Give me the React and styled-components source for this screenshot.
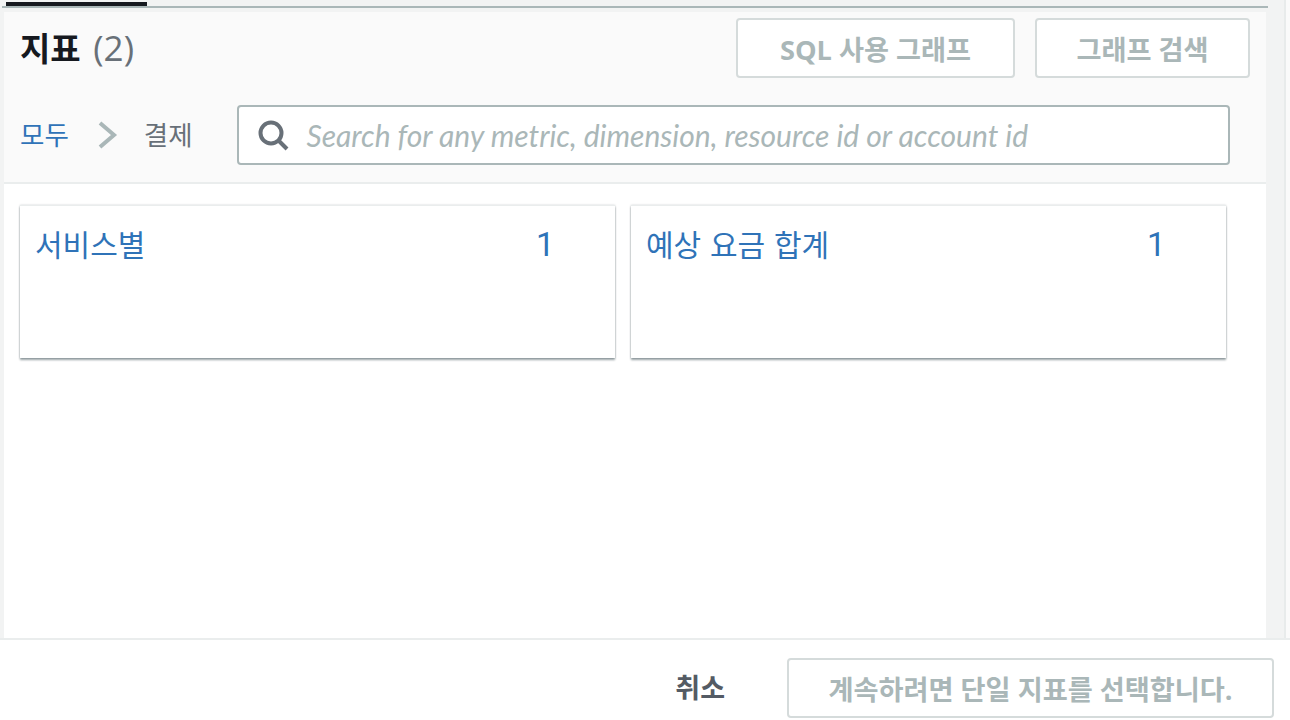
import React from 'react'
import styled, { createGlobalStyle } from 'styled-components'

const Global = createGlobalStyle`
  html, body {
    margin: 0;
    padding: 0;
    background: #f2f3f3;
  }
  * {
    box-sizing: border-box;
  }
`

const font = `"Open Sans", "Noto Sans CJK KR", sans-serif`

const Page = styled.div`
  width: 1290px;
  height: 720px;
  overflow: hidden;
  display: flex;
  flex-direction: column;
  font-family: ${font};
  background: #fafafa;
`

const Body = styled.div`
  flex: 1;
  min-height: 0;
  display: flex;
  flex-direction: column;
  margin-right: 4px;
  padding: 0 18px 0 4px;
  background: #f2f3f3;
  border-right: 2px solid #e8ebeb;
`

const TabLine = styled.div`
  height: 8px;
  margin: 0 -2px;
  border-bottom: 2px solid #aab7b8;
  padding: 2px 0 0 4px;
`

const ActiveTab = styled.div`
  width: 141px;
  height: 4px;
  background: #16191f;
`

const Panel = styled.div`
  flex: 1;
  margin-top: 4px;
  background: #fff;
  display: flex;
  flex-direction: column;
`

const Header = styled.div`
  height: 172px;
  background: #fafafa;
  border-bottom: 2px solid #eaeded;
  padding: 6px 16px 0;
`

const TitleRow = styled.div`
  display: flex;
  justify-content: space-between;
  align-items: center;
  height: 60px;
`

const Title = styled.h2`
  margin: 0;
  font-size: 33px;
  line-height: 60px;
  font-weight: 700;
  color: #16191f;
`

const Count = styled.span`
  margin-left: 4px;
  font-size: 35px;
  font-weight: 400;
  color: #687078;
`

const Actions = styled.div`
  display: flex;
  gap: 20px;
`

const GhostButton = styled.button`
  height: 60px;
  width: ${(p) => p.$width}px;
  padding: 0;
  background: #fff;
  border: 2px solid #d5dbdb;
  border-radius: 4px;
  font-family: ${font};
  font-size: 27.2px;
  font-weight: 700;
  color: #aab7b8;
`

const FilterRow = styled.div`
  display: flex;
  align-items: center;
  margin-top: 27px;
  padding-right: 20px;
`

const Crumb = styled.span`
  font-size: 26.5px;
  line-height: 60px;
  color: ${(p) => (p.$link ? '#2f73b8' : '#687078')};
`

const Chevron = styled.svg`
  width: 20px;
  height: 30px;
  margin: 0 26px 0 29px;
`

const SearchBox = styled.div`
  flex: 1;
  height: 60px;
  margin-left: 44px;
  display: flex;
  align-items: center;
  gap: 18px;
  padding-left: 18px;
  background: #fff;
  border: 2px solid #aab7b8;
  border-radius: 4px;
`

const Placeholder = styled.span`
  font-family: Lato, "Noto Sans CJK KR", sans-serif;
  font-size: 30px;
  font-style: italic;
  color: #aab7b8;
`

const Cards = styled.div`
  flex: 1;
  display: flex;
  gap: 16px;
  padding: 21px 16px 0;
  align-items: flex-start;
`

const Card = styled.div`
  width: 595px;
  height: 153px;
  padding: 17px 16px 17px 15px;
  display: flex;
  background: #fff;
  border-top: 1px solid #eaeded;
  box-shadow: 0 2px 2px 0 rgba(0, 28, 36, 0.4), 0 0 2px 0 rgba(0, 28, 36, 0.2);
`

const CardName = styled.span`
  width: 501px;
  font-size: 30px;
  line-height: 44px;
  word-spacing: 1px;
  color: #2f73b8;
`

const CardCount = styled.span`
  font-family: Roboto, sans-serif;
  font-size: 33px;
  line-height: 44px;
  color: #2f73b8;
`

const Footer = styled.div`
  height: 82px;
  display: flex;
  justify-content: flex-end;
  align-items: flex-start;
  gap: 62px;
  padding: 18px 16px 0 0;
  background: #fff;
  border-top: 2px solid #eaeded;
`

const Cancel = styled.span`
  font-size: 27px;
  line-height: 60px;
  font-weight: 700;
  color: #545b64;
`

const metrics = [
  { name: '서비스별', count: 1 },
  { name: '예상 요금 합계', count: 1 },
]

export default function App() {
  return (
    <Page>
      <Global />
      <Body>
        <TabLine>
          <ActiveTab />
        </TabLine>
        <Panel>
          <Header>
            <TitleRow>
              <Title>
                지표 <Count>(2)</Count>
              </Title>
              <Actions>
                <GhostButton $width={279}>SQL 사용 그래프</GhostButton>
                <GhostButton $width={215}>그래프 검색</GhostButton>
              </Actions>
            </TitleRow>
            <FilterRow>
              <Crumb $link>모두</Crumb>
              <Chevron viewBox="0 0 20 30" fill="none">
                <path d="M2 3l14 12L2 27" stroke="#aab7b8" strokeWidth="4" />
              </Chevron>
              <Crumb>결제</Crumb>
              <SearchBox>
                <svg width="32" height="32" viewBox="0 0 32 32" fill="none">
                  <circle cx="14" cy="14" r="10.5" stroke="#687078" strokeWidth="4" />
                  <path d="M21 21l9 9" stroke="#687078" strokeWidth="4" />
                </svg>
                <Placeholder>Search for any metric, dimension, resource id or account id</Placeholder>
              </SearchBox>
            </FilterRow>
          </Header>
          <Cards>
            {metrics.map((m) => (
              <Card key={m.name}>
                <CardName>{m.name}</CardName>
                <CardCount>{m.count}</CardCount>
              </Card>
            ))}
          </Cards>
        </Panel>
      </Body>
      <Footer>
        <Cancel>취소</Cancel>
        <GhostButton $width={487}>계속하려면 단일 지표를 선택합니다.</GhostButton>
      </Footer>
    </Page>
  )
}
